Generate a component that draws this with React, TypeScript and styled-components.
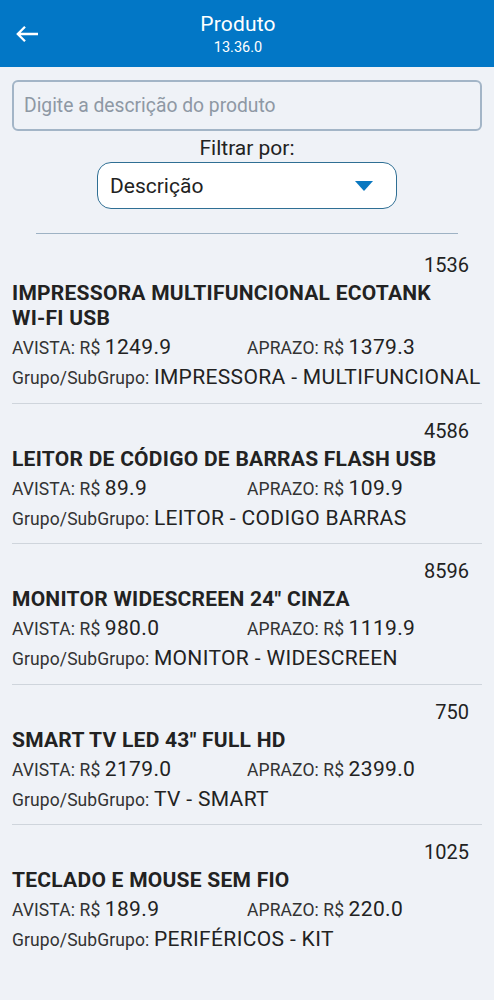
import React from 'react';
import styled, { createGlobalStyle } from 'styled-components';

const GlobalStyle = createGlobalStyle`
  html, body {
    margin: 0;
    padding: 0;
    background: #eff2f7;
  }
  body {
    font-family: Roboto, "Noto Sans", "Liberation Sans", sans-serif;
    color: #222;
  }
`;

const Page = styled.div`
  width: 494px;
  min-height: 1000px;
  background: #eff2f7;
`;

const Header = styled.header`
  height: 67px;
  background: #0277c6;
  display: flex;
  align-items: center;
  color: #fff;
`;

const BackButton = styled.button`
  width: 44px;
  height: 67px;
  border: none;
  background: transparent;
  padding: 0 0 0 15px;
  display: flex;
  align-items: center;
  cursor: pointer;
  flex-shrink: 0;
`;

const TitleBlock = styled.div`
  flex: 1;
  display: flex;
  flex-direction: column;
  align-items: center;
  padding-right: 62px;
`;

const Title = styled.div`
  font-size: 21px;
  line-height: 25px;
  letter-spacing: 0.2px;
`;

const Version = styled.div`
  font-size: 14.5px;
  line-height: 17px;
  margin-top: 2px;
`;

const Controls = styled.div`
  padding: 13px 12px 0;
  display: flex;
  flex-direction: column;
  align-items: center;
`;

const SearchInput = styled.input`
  box-sizing: border-box;
  width: 100%;
  height: 51px;
  border: 2px solid #a3b5c7;
  border-radius: 6px;
  background: #eff2f7;
  padding: 0 10px;
  font-family: inherit;
  font-size: 19.3px;
  color: #222;
  outline: none;
  &::placeholder {
    color: #8e98a4;
  }
`;

const FilterLabel = styled.div`
  font-size: 21px;
  line-height: 24px;
  margin-top: 5px;
  color: #222;
`;

const Select = styled.div`
  box-sizing: border-box;
  width: 300px;
  height: 47px;
  margin-top: 2px;
  border: 1.5px solid #2f6f94;
  border-radius: 14px;
  background: #fff;
  display: flex;
  align-items: center;
  justify-content: space-between;
  padding: 0 23px 0 12px;
  font-size: 21px;
  color: #222;
`;

const Divider = styled.hr`
  width: 422px;
  border: none;
  border-top: 1.5px solid #9eb2c4;
  margin: 24px 0 0;
`;

const List = styled.div`
  padding: 0 12px;
  margin-top: 4px;
`;

const Item = styled.div<{ $last?: boolean }>`
  border-bottom: 1.5px solid ${p => (p.$last ? 'transparent' : '#cfd5dc')};
  padding: 15px 0 9.5px;
`;

const Code = styled.div`
  text-align: right;
  padding-right: 13px;
  font-size: 20px;
  line-height: 24px;
`;

const Name = styled.div`
  font-weight: 700;
  font-size: 21px;
  line-height: 25px;
  letter-spacing: 0.25px;
  margin-top: 4px;
  color: #222;
`;

const Word = styled.span`
  white-space: nowrap;
`;

const PriceRow = styled.div`
  display: grid;
  grid-template-columns: 235px 1fr;
  margin-top: 2px;
`;

const Field = styled.div`
  line-height: 29px;
  white-space: nowrap;
`;

const Label = styled.span`
  font-size: 17.5px;
  letter-spacing: 0.1px;
  color: #333;
`;

const Value = styled.span`
  font-size: 21px;
  letter-spacing: 0.35px;
  color: #222;
`;

interface Product {
  code: number;
  name: string;
  avista: string;
  aprazo: string;
  grupo: string;
}

const products: Product[] = [
  {
    code: 1536,
    name: 'IMPRESSORA MULTIFUNCIONAL ECOTANK WI-FI USB',
    avista: '1249.9',
    aprazo: '1379.3',
    grupo: 'IMPRESSORA - MULTIFUNCIONAL',
  },
  {
    code: 4586,
    name: 'LEITOR DE CÓDIGO DE BARRAS FLASH USB',
    avista: '89.9',
    aprazo: '109.9',
    grupo: 'LEITOR - CODIGO BARRAS',
  },
  {
    code: 8596,
    name: 'MONITOR WIDESCREEN 24" CINZA',
    avista: '980.0',
    aprazo: '1119.9',
    grupo: 'MONITOR - WIDESCREEN',
  },
  {
    code: 750,
    name: 'SMART TV LED 43" FULL HD',
    avista: '2179.0',
    aprazo: '2399.0',
    grupo: 'TV - SMART',
  },
  {
    code: 1025,
    name: 'TECLADO E MOUSE SEM FIO',
    avista: '189.9',
    aprazo: '220.0',
    grupo: 'PERIFÉRICOS - KIT',
  },
];

// words only break at spaces, like the Android TextView does (not at "WI-FI")
const ProductName: React.FC<{ text: string }> = ({ text }) => (
  <Name>
    {text.split(' ').map((w, i) => (
      <React.Fragment key={i}>
        {i > 0 && ' '}
        <Word>{w}</Word>
      </React.Fragment>
    ))}
  </Name>
);

const ProductItem: React.FC<{ product: Product; last: boolean }> = ({ product, last }) => (
  <Item $last={last}>
    <Code>{product.code}</Code>
    <ProductName text={product.name} />
    <PriceRow>
      <Field>
        <Label>AVISTA: R$ </Label>
        <Value>{product.avista}</Value>
      </Field>
      <Field>
        <Label>APRAZO: R$ </Label>
        <Value>{product.aprazo}</Value>
      </Field>
    </PriceRow>
    <Field>
      <Label>Grupo/SubGrupo: </Label>
      <Value>{product.grupo}</Value>
    </Field>
  </Item>
);

const App: React.FC = () => (
  <Page>
    <GlobalStyle />
    <Header>
      <BackButton aria-label="Voltar">
        <svg width="24" height="18" viewBox="0 0 24 18" fill="none">
          <path d="M23 9H3M10 1.8L2.8 9l7.2 7.2" stroke="#fff" strokeWidth="2.3" />
        </svg>
      </BackButton>
      <TitleBlock>
        <Title>Produto</Title>
        <Version>13.36.0</Version>
      </TitleBlock>
    </Header>
    <Controls>
      <SearchInput placeholder="Digite a descrição do produto" />
      <FilterLabel>Filtrar por:</FilterLabel>
      <Select>
        <span>Descrição</span>
        <svg width="18" height="10" viewBox="0 0 18 10">
          <path d="M0 0h18L9 10z" fill="#0a78c0" />
        </svg>
      </Select>
      <Divider />
    </Controls>
    <List>
      {products.map((p, i) => (
        <ProductItem key={p.code} product={p} last={i === products.length - 1} />
      ))}
    </List>
  </Page>
);

export default App;
